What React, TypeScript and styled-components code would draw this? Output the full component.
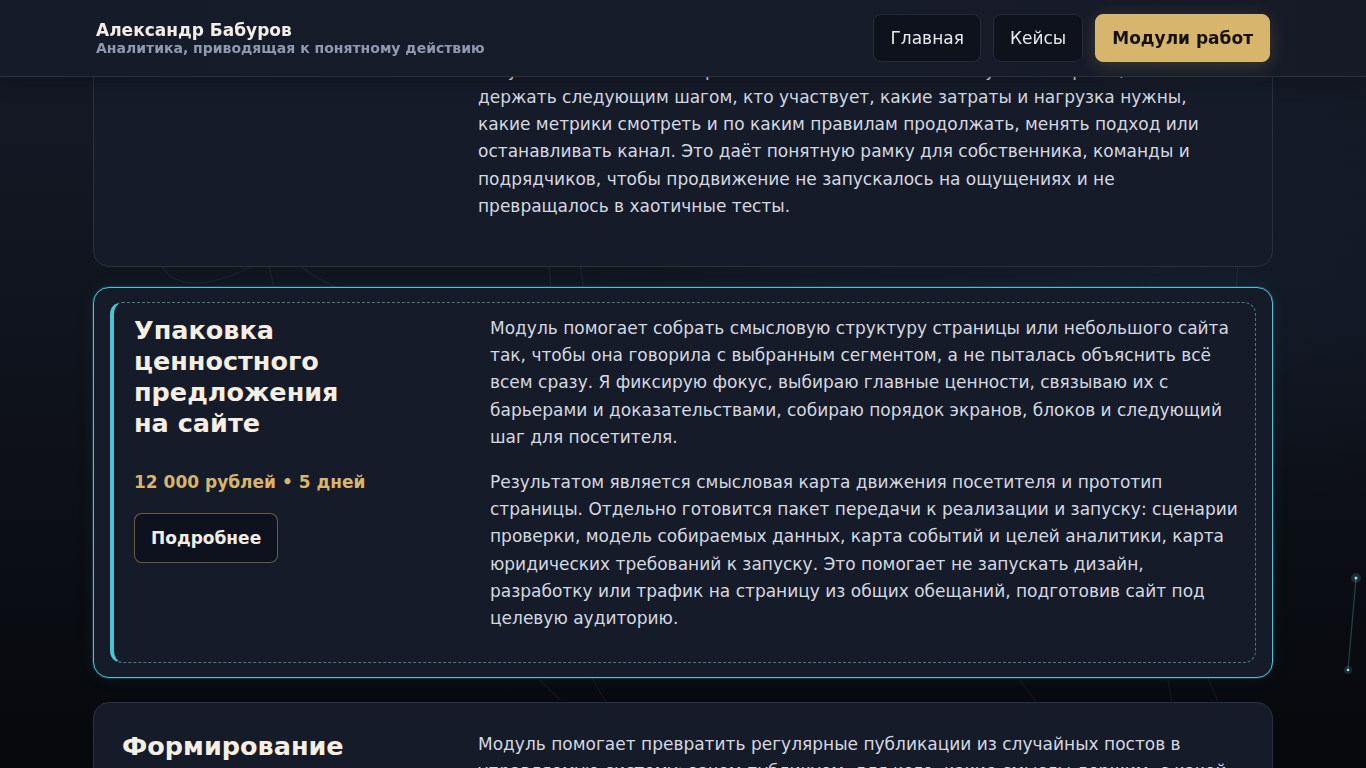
import React from "react";
import styled, { createGlobalStyle, css } from "styled-components";

const GlobalStyle = createGlobalStyle`
  html, body {
    margin: 0;
    padding: 0;
    background: #0c0f16;
  }
  body {
    font-family: "DejaVu Sans", "Noto Sans", sans-serif;
    color: #d6dae3;
    -webkit-font-smoothing: antialiased;
  }
  * { box-sizing: border-box; }
`;

const Page = styled.div`
  position: relative;
  height: 100vh;
  overflow: hidden;
  background:
    radial-gradient(ellipse 60% 45% at 85% 35%, rgba(24, 34, 52, 0.5), transparent 70%),
    linear-gradient(180deg, #151a27 0%, #10141e 40%, #0a0d13 75%, #06080b 100%);
`;

const Backdrop = styled.svg`
  position: absolute;
  inset: 0;
  width: 100%;
  height: 100%;
  pointer-events: none;
  z-index: 0;
`;

const Header = styled.header`
  position: fixed;
  top: 0;
  left: 0;
  right: 0;
  height: 77px;
  z-index: 10;
  display: flex;
  justify-content: center;
  background: linear-gradient(90deg, #161b29 0%, #171c2a 60%, #161a27 100%);
  border-bottom: 1px solid #2a2f3d;
  box-shadow: 0 6px 18px rgba(0, 0, 0, 0.22);
`;

const HeaderInner = styled.div`
  width: 1174px;
  display: flex;
  align-items: center;
  justify-content: space-between;
`;

const Brand = styled.div`
  display: flex;
  flex-direction: column;
`;

const BrandName = styled.div`
  font-size: 17px;
  font-weight: 700;
  line-height: 20px;
  color: #f3eee5;
`;

const BrandTagline = styled.div`
  font-size: 14px;
  font-weight: 700;
  line-height: 16px;
  color: #8f9ab0;
`;

const Nav = styled.nav`
  display: flex;
  gap: 12px;
  align-items: center;
`;

const NavLink = styled.a<{ $current?: boolean }>`
  display: inline-flex;
  align-items: center;
  height: 48px;
  padding: 0 16px;
  border-radius: 8px;
  font-size: 17px;
  text-decoration: none;
  cursor: pointer;
  color: #e9e9ec;
  background: #0e121d;
  border: 1px solid #262b39;
  ${(p) =>
    p.$current &&
    css`
      font-weight: 700;
      color: #15120d;
      background: #d8b56d;
      border-color: #d8b56d;
      box-shadow: 0 4px 18px rgba(216, 181, 109, 0.2);
    `}
`;

const Feed = styled.main`
  position: relative;
  z-index: 1;
  width: 1180px;
  margin: 0 auto;
  display: flex;
  flex-direction: column;
  gap: 22px;
`;

/* the page is scrolled: the first module sits partly under the header */
const ScrolledPast = styled.div`
  height: 267px;
  display: flex;
  flex-direction: column;
  justify-content: flex-end;
  overflow: hidden;
`;

const Card = styled.article<{ $active?: boolean }>`
  flex-shrink: 0;
  background: #161b29;
  border: 1px solid #2b303e;
  border-radius: 16px;
  padding: 28px;
  ${(p) =>
    p.$active &&
    css`
      padding: 14px 16px;
      border-color: #4cc3d5;
      transform: translateY(-2px);
      box-shadow: 0 0 0 1px rgba(76, 195, 213, 0.18), 0 0 18px rgba(76, 195, 213, 0.08);
    `}
`;

const CardBody = styled.div<{ $active?: boolean }>`
  display: grid;
  grid-template-columns: 320px minmax(0, 750px);
  column-gap: 36px;
  ${(p) =>
    p.$active &&
    css`
      padding: 12px 16px 12px 20px;
      border: 1px dashed rgba(76, 195, 213, 0.6);
      border-left: 4px solid #4cc3d5;
      border-radius: 12px;
    `}
`;

const Aside = styled.div`
  display: flex;
  flex-direction: column;
  align-items: flex-start;
`;

const Title = styled.h2`
  margin: 0;
  font-size: 25.5px;
  line-height: 31px;
  font-weight: 700;
  color: #f4eee3;
`;

const Price = styled.div`
  margin-top: 30px;
  font-size: 17px;
  line-height: 27px;
  font-weight: 700;
  color: #d8b56d;
`;

const MoreButton = styled.button`
  margin-top: 17px;
  height: 50px;
  padding: 0 16px;
  border-radius: 8px;
  border: 1px solid rgba(216, 181, 109, 0.45);
  background: #0e121e;
  color: #f1ede6;
  font-family: inherit;
  font-size: 17px;
  font-weight: 700;
  cursor: pointer;
`;

const Text = styled.div`
  p {
    margin: 0 0 18px;
    font-size: 17px;
    line-height: 1.6;
    color: #d4d8e1;
  }
`;

type Module = {
  title: string;
  price: string;
  paragraphs: string[];
};

const modules: Module[] = [
  {
    title: "Стратегия продвижения и выбор каналов",
    price: "18 000 рублей • 7 дней",
    paragraphs: [
      "Модуль помогает разобраться, какие каналы продвижения действительно подходят продукту и выбранному сегменту, а какие только съедят бюджет и время команды. Я собираю исходные данные, сравниваю каналы по стоимости контакта, скорости отдачи и требованиям к ресурсам, фиксирую ограничения и риски, формулирую гипотезы и критерии их проверки, чтобы первые шаги опирались на понятные расчёты, а не на чужие кейсы и советы из ленты. Отдельно смотрю, какие материалы, площадки и данные уже есть у бизнеса и что из этого можно использовать сразу, без лишних вложений.",
      "Результатом является карта каналов и гипотез: что запускать первым, что держать следующим шагом, кто участвует, какие затраты и нагрузка нужны, какие метрики смотреть и по каким правилам продолжать, менять подход или останавливать канал. Это даёт понятную рамку для собственника, команды и подрядчиков, чтобы продвижение не запускалось на ощущениях и не превращалось в хаотичные тесты.",
    ],
  },
  {
    title: "Упаковка ценностного предложения на сайте",
    price: "12 000 рублей • 5 дней",
    paragraphs: [
      "Модуль помогает собрать смысловую структуру страницы или небольшого сайта так, чтобы она говорила с выбранным сегментом, а не пыталась объяснить всё всем сразу. Я фиксирую фокус, выбираю главные ценности, связываю их с барьерами и доказательствами, собираю порядок экранов, блоков и следующий шаг для посетителя.",
      "Результатом является смысловая карта движения посетителя и прототип страницы. Отдельно готовится пакет передачи к реализации и запуску: сценарии проверки, модель собираемых данных, карта событий и целей аналитики, карта юридических требований к запуску. Это помогает не запускать дизайн, разработку или трафик на страницу из общих обещаний, подготовив сайт под целевую аудиторию.",
    ],
  },
  {
    title: "Формирование контент-системы",
    price: "15 000 рублей • 6 дней",
    paragraphs: [
      "Модуль помогает превратить регулярные публикации из случайных постов в управляемую систему: зачем публикуем, для кого, какие смыслы держим, с какой частотой выходим и как понимаем, что контент работает на продажи, а не только на охваты.",
    ],
  },
];

function ModuleCard({ module, active }: { module: Module; active?: boolean }) {
  return (
    <Card $active={active}>
      <CardBody $active={active}>
        <Aside>
          <Title>
            {active ? (
              <>
                Упаковка
                <br />
                ценностного
                <br />
                предложения
                <br />
                на сайте
              </>
            ) : (
              module.title
            )}
          </Title>
          <Price>{module.price}</Price>
          <MoreButton>Подробнее</MoreButton>
        </Aside>
        <Text>
          {module.paragraphs.map((t, i) => (
            <p key={i}>{t}</p>
          ))}
        </Text>
      </CardBody>
    </Card>
  );
}

function Threads() {
  const line = "rgba(110, 165, 195, 0.09)";
  return (
    <Backdrop viewBox="0 0 1366 768" preserveAspectRatio="none">
      <g fill="none" stroke={line} strokeWidth="1.2">
        <path d="M160 262 C 168 282, 190 290, 230 276 C 250 268, 262 262, 268 258" />
        <path d="M268 262 L 275 292" />
        <path d="M296 262 C 310 276, 330 286, 360 296" />
        <path d="M549 262 L 551 290" />
        <path d="M580 262 L 584 292" />
        <path d="M1238 262 L 1236 290" />
        <path d="M540 680 L 560 700" />
        <path d="M592 678 L 606 702" />
        <path d="M1020 680 L 1036 702" />
        <path d="M1168 680 L 1172 702" />
        <path d="M1208 678 L 1218 702" />
        <path d="M1356 578 L 1348 670" stroke="rgba(120, 190, 205, 0.3)" />
      </g>
      <g fill="#9fe3ee">
        <circle cx="1356" cy="578" r="1.5" />
        <circle cx="1348" cy="670" r="1.3" />
      </g>
      <g fill="rgba(120, 220, 235, 0.15)">
        <circle cx="1356" cy="578" r="5" />
        <circle cx="1348" cy="670" r="4" />
      </g>
    </Backdrop>
  );
}

export default function App() {
  const [first, current, next] = modules;
  return (
    <>
      <GlobalStyle />
      <Page>
        <Threads />
        <Header>
          <HeaderInner>
            <Brand>
              <BrandName>Александр Бабуров</BrandName>
              <BrandTagline>Аналитика, приводящая к понятному действию</BrandTagline>
            </Brand>
            <Nav>
              <NavLink>Главная</NavLink>
              <NavLink>Кейсы</NavLink>
              <NavLink $current>Модули работ</NavLink>
            </Nav>
          </HeaderInner>
        </Header>
        <Feed>
          <ScrolledPast>
            <ModuleCard module={first} />
          </ScrolledPast>
          <ModuleCard module={current} active />
          <ModuleCard module={next} />
        </Feed>
      </Page>
    </>
  );
}
